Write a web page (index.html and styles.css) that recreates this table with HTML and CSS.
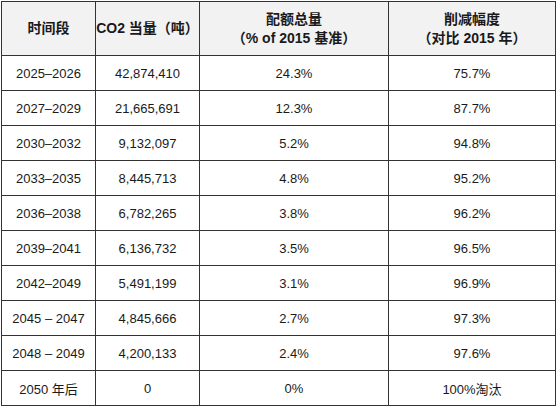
FILE: index.html
```html
<!DOCTYPE html>
<html lang="zh">

<head>
    <meta charset="UTF-8">
    <meta name="viewport" content="width=device-width, initial-scale=1.0">
    <title>配额总量</title>
    <link rel="stylesheet" href="styles.css">
</head>

<body>
    <table class="quota-table">
        <colgroup>
            <col class="col-period">
            <col class="col-amount">
            <col class="col-quota">
            <col class="col-cut">
        </colgroup>
        <thead>
            <tr>
                <th>时间段</th>
                <th>CO2 当量（吨）</th>
                <th>配额总量<br>（% of 2015 基准）</th>
                <th>削减幅度<br>（对比 2015 年）</th>
            </tr>
        </thead>
        <tbody>
            <tr><td>2025–2026</td><td>42,874,410</td><td>24.3%</td><td>75.7%</td></tr>
            <tr><td>2027–2029</td><td>21,665,691</td><td>12.3%</td><td>87.7%</td></tr>
            <tr><td>2030–2032</td><td>9,132,097</td><td>5.2%</td><td>94.8%</td></tr>
            <tr><td>2033–2035</td><td>8,445,713</td><td>4.8%</td><td>95.2%</td></tr>
            <tr><td>2036–2038</td><td>6,782,265</td><td>3.8%</td><td>96.2%</td></tr>
            <tr><td>2039–2041</td><td>6,136,732</td><td>3.5%</td><td>96.5%</td></tr>
            <tr><td>2042–2049</td><td>5,491,199</td><td>3.1%</td><td>96.9%</td></tr>
            <tr><td>2045 – 2047</td><td>4,845,666</td><td>2.7%</td><td>97.3%</td></tr>
            <tr><td>2048 – 2049</td><td>4,200,133</td><td>2.4%</td><td>97.6%</td></tr>
            <tr><td>2050 年后</td><td>0</td><td>0%</td><td>100%淘汰</td></tr>
        </tbody>
    </table>
</body>

</html>
```

FILE: styles.css
```css
body {
    margin: 1px;
    background-color: #fff;
    font-family: 'Liberation Sans', 'Noto Sans CJK SC', sans-serif;
    font-size: 13px;
    color: #1a1a1a;
}

.quota-table {
    border-collapse: collapse;
    table-layout: fixed;
    width: 554px;
}

.col-period {
    width: 94px;
}

.col-amount {
    width: 104px;
}

.col-quota {
    width: 189px;
}

.col-cut {
    width: 167px;
}

.quota-table th,
.quota-table td {
    border: 1px solid #333;
    padding: 0;
    text-align: center;
    vertical-align: middle;
}

.quota-table th {
    background-color: #f2f2f2;
    font-size: 14px;
    font-weight: bold;
    height: 53px;
    line-height: 19px;
}

.quota-table td {
    height: 34px;
}
```
